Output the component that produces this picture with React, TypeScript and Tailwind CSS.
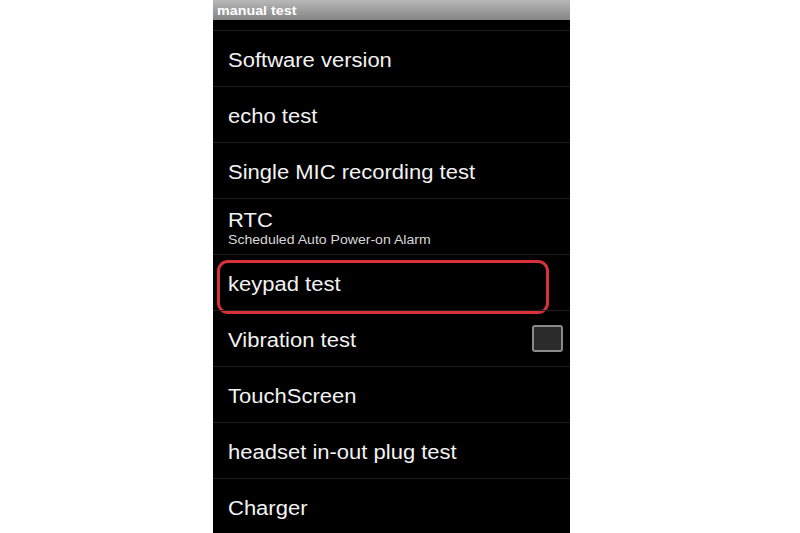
import React from "react";

type Item = { title: string; subtitle?: string; checkbox?: boolean; highlight?: boolean };

const items: Item[] = [
  { title: "Software version" },
  { title: "echo test" },
  { title: "Single MIC recording test" },
  { title: "RTC", subtitle: "Scheduled Auto Power-on Alarm" },
  { title: "keypad test", highlight: true },
  { title: "Vibration test", checkbox: true },
  { title: "TouchScreen" },
  { title: "headset in-out plug test" },
  { title: "Charger" },
];

function Row({ item }: { item: Item }) {
  return (
    <div className="relative flex h-[56px] shrink-0 items-center border-t border-[#1e1e1e] pl-[15px] pr-[7px]">
      <div className="flex min-w-0 flex-1 flex-col items-start pt-[3px]">
        <span className="origin-left scale-x-110 text-[20px] leading-[23px] text-[#f2f2f2]">{item.title}</span>
        {item.subtitle && (
          <span className="origin-left scale-x-110 text-[12.8px] leading-[16px] text-[#d8d8d8]">
            {item.subtitle}
          </span>
        )}
      </div>
      {item.checkbox && (
        <div className="h-[27px] w-[31px] rounded-[3px] border-[2px] border-[#8a8a8a] bg-[#2b2b2b]" />
      )}
      {item.highlight && (
        <div className="pointer-events-none absolute left-[4px] top-[5px] h-[54px] w-[332px] rounded-[11px] border-[3px] border-[#d8313c]" />
      )}
    </div>
  );
}

export default function App() {
  return (
    <div
      className="flex h-[533px] w-[800px] overflow-hidden bg-white pl-[213px]"
      style={{ fontFamily: "'Liberation Sans', Arial, sans-serif" }}
    >
      <div className="flex h-[533px] w-[357px] flex-col overflow-hidden bg-black">
        <div className="flex h-[20px] shrink-0 items-center bg-gradient-to-b from-[#b8b8b8] to-[#858585] pl-[4px]">
          <span className="origin-left scale-x-110 text-[13px] font-bold leading-none text-white">manual test</span>
        </div>
        <div className="h-[10px] shrink-0" />
        {items.map((it) => (
          <Row key={it.title} item={it} />
        ))}
      </div>
    </div>
  );
}
